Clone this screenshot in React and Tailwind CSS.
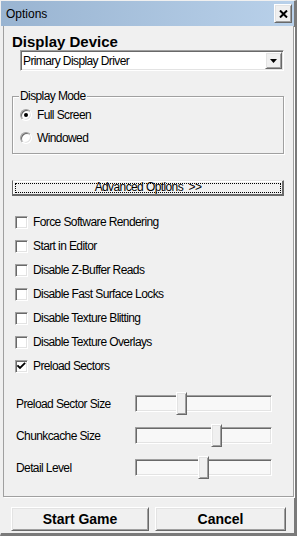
import React from 'react';

const ui = "font-['Liberation_Sans',Arial,sans-serif] text-[12px] tracking-[-0.6px] text-black";

const raised = "border border-t-white border-l-white border-r-[#696969] border-b-[#696969] shadow-[inset_1px_1px_0_#e3e3e3,inset_-1px_-1px_0_#a0a0a0] bg-[#f0f0f0]";
const sunken = "border border-t-[#a0a0a0] border-l-[#a0a0a0] border-r-white border-b-white shadow-[inset_1px_1px_0_#696969,inset_-1px_-1px_0_#e3e3e3]";

const Radio = ({ label, checked }) => (
  <div className="flex items-center h-[16px]">
    <div className="w-[12px] h-[12px] rounded-full border border-t-[#a0a0a0] border-l-[#a0a0a0] border-r-white border-b-white bg-white shadow-[inset_1px_1px_0_#696969,inset_-1px_-1px_0_#e3e3e3] flex items-center justify-center">
      {checked && <div className="w-[4px] h-[4px] rounded-full bg-black" />}
    </div>
    <span className="ml-[5px] leading-[16px] whitespace-nowrap">{label}</span>
  </div>
);

const Check = ({ label, checked }) => (
  <div className="flex items-center h-[24px] pl-[11px]">
    <div className={`w-[13px] h-[13px] bg-white ${sunken}`}>
      {checked && (
        <svg width="11" height="11" viewBox="0 0 11 11">
          <path d="M2 5 L4 7 L8.5 2.5" fill="none" stroke="black" strokeWidth="1.8" strokeLinecap="square" />
        </svg>
      )}
    </div>
    <span className="ml-[5px] leading-[16px] whitespace-nowrap">{label}</span>
  </div>
);

const Slider = ({ label, pos }) => (
  <div className="flex items-center h-[17px]">
    <span className="w-[131px] pl-[12px] leading-[16px] whitespace-nowrap">{label}</span>
    <div className={`relative w-[137px] h-[17px] bg-[#f8f8f8] ${sunken}`}>
      <div
        className={`absolute top-[-4px] w-[11px] h-[23px] ${raised}`}
        style={{ left: pos }}
      />
    </div>
  </div>
);

export default function App() {
  return (
    <div className={`w-[297px] h-[536px] bg-[#f0f0f0] flex flex-col border-l border-t border-l-[#f0f0f0] border-t-[#f0f0f0] border-r-[3px] border-b-[3px] border-r-[#7a7a7a] border-b-[#7a7a7a] ${ui}`}>
      {/* title bar */}
      <div className="h-[25px] flex items-center justify-between pl-[5px] pr-[2px] bg-gradient-to-r from-[#99b4d1] to-[#b9d1ea]">
        <span className="text-[12px] tracking-normal leading-[14px]">Options</span>
        <div className={`w-[18px] h-[19px] flex items-center justify-center ${raised}`}>
          <svg width="9" height="8" viewBox="0 0 9 8">
            <path d="M1 0.5 L8 7.5 M8 0.5 L1 7.5" stroke="black" strokeWidth="2" />
          </svg>
        </div>
      </div>

      {/* main panel */}
      <div className="ml-[2px] h-[471px] border border-t-0 border-[#a0a0a0] shadow-[1px_1px_0_white] flex flex-col">
        <div className="mt-[8px] pl-[8px] font-bold text-[15px] tracking-normal leading-[16px]">
          Display Device
        </div>

        <div className={`ml-[16px] w-[264px] h-[21px] bg-white flex items-center justify-between pl-[2px] pr-[1px] ${sunken}`}>
          <span className="leading-[16px] whitespace-nowrap">Primary Display Driver</span>
          <div className={`w-[17px] h-[17px] flex items-center justify-center ${raised}`}>
            <svg width="7" height="4" viewBox="0 0 7 4">
              <path d="M0 0 H7 L3.5 4 Z" fill="black" />
            </svg>
          </div>
        </div>

        <div className="relative ml-[8px] mt-[25px] w-[272px] h-[58px] border border-[#a0a0a0] shadow-[1px_1px_0_white,inset_1px_1px_0_white] pl-[7px] pt-[10px] flex flex-col gap-[7px]">
          <span className="absolute left-[6px] top-[-9px] px-[1px] bg-[#f0f0f0] leading-[16px] whitespace-nowrap">Display Mode</span>
          <Radio label="Full Screen" checked />
          <Radio label="Windowed" />
        </div>

        <div className="ml-[8px] mt-[26px] w-[272px] h-[16px] border border-t-[#e3e3e3] border-l-[#696969] border-r-[#696969] border-b-[#696969] shadow-[inset_-1px_-1px_0_#696969,inset_1px_1px_0_white] p-[2px]">
          <div className="h-full border border-dotted border-black flex items-center justify-center">
            <span className="leading-[12px] mt-[-3px] whitespace-nowrap">Advanced Options&nbsp;&nbsp;&gt;&gt;</span>
          </div>
        </div>

        <div className="mt-[14px] flex flex-col">
          <Check label="Force Software Rendering" />
          <Check label="Start in Editor" />
          <Check label="Disable Z-Buffer Reads" />
          <Check label="Disable Fast Surface Locks" />
          <Check label="Disable Texture Blitting" />
          <Check label="Disable Texture Overlays" />
          <Check label="Preload Sectors" checked />
        </div>

        <div className="mt-[17px] flex flex-col gap-[15px]">
          <Slider label="Preload Sector Size" pos={40} />
          <Slider label="Chunkcache Size" pos={75} />
          <Slider label="Detail Level" pos={62} />
        </div>
      </div>

      {/* buttons */}
      <div className="mt-[10px] flex pl-[10px] gap-[6px]">
        <button className={`w-[138px] h-[24px] font-bold text-[14px] tracking-normal leading-[16px] ${raised}`}>
          Start Game
        </button>
        <button className={`w-[131px] h-[24px] font-bold text-[14px] tracking-normal leading-[16px] ${raised}`}>
          Cancel
        </button>
      </div>
    </div>
  );
}
